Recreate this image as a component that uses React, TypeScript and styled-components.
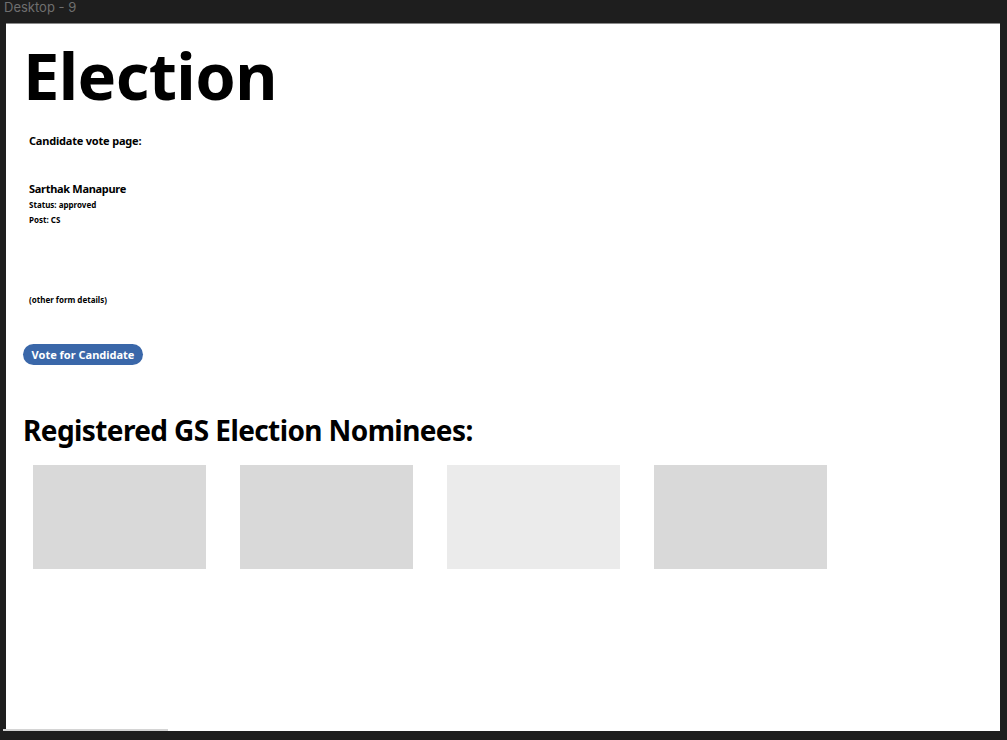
import styled, { createGlobalStyle } from "styled-components";

const Global = createGlobalStyle`
  html, body {
    margin: 0;
    padding: 0;
    background: #1e1e1e;
    height: 100%;
  }
  body {
    font-family: "Noto Sans", "DejaVu Sans", sans-serif;
  }
`;

const nominees = [
  { id: 1, shade: "#d9d9d9" },
  { id: 2, shade: "#d9d9d9" },
  { id: 3, shade: "#ebebeb" },
  { id: 4, shade: "#d9d9d9" },
];

export default function App() {
  return (
    <>
      <Global />
      <Frame>
        <FrameLabel>Desktop - 9</FrameLabel>
        <Canvas>
          <Title>Election</Title>
          <Details>
            <PageLabel>Candidate vote page:</PageLabel>
            <Name>Sarthak Manapure</Name>
            <Meta $gap={7}>Status: approved</Meta>
            <Meta $gap={7}>Post: CS</Meta>
            <Meta $gap={72}>(other form details)</Meta>
          </Details>
          <VoteButton>Vote for Candidate</VoteButton>
          <SectionTitle>Registered GS Election Nominees:</SectionTitle>
          <Cards>
            {nominees.map((n) => (
              <Card key={n.id} $shade={n.shade} />
            ))}
          </Cards>
        </Canvas>
        <ScrollThumb />
      </Frame>
    </>
  );
}

const Frame = styled.div`
  width: 1007px;
  height: 740px;
  box-sizing: border-box;
  padding: 0 7px 9px 6px;
  display: flex;
  flex-direction: column;
  position: relative;
  overflow: hidden;
`;

const FrameLabel = styled.div`
  height: 23px;
  margin-left: -2px;
  font-family: "Inter", "Noto Sans", sans-serif;
  font-size: 13px;
  line-height: 14px;
  color: #6f6f6f;
`;

const Canvas = styled.div`
  flex: 1;
  background: #ffffff;
  border-top: 1px solid #8a8a8a;
  padding: 18px 17px 0;
  display: flex;
  flex-direction: column;
  align-items: flex-start;
`;

const Title = styled.h1`
  margin: 0;
  font-size: 65px;
  line-height: 66px;
  font-weight: 700;
  color: #000;
  letter-spacing: -0.6px;
`;

const Details = styled.div`
  padding-left: 6px;
  margin-top: 27px;
  display: flex;
  flex-direction: column;
`;

const PageLabel = styled.div`
  font-size: 11px;
  line-height: 11px;
  font-weight: 700;
  letter-spacing: -0.2px;
  color: #000;
`;

const Name = styled.div`
  margin-top: 37px;
  font-size: 11px;
  line-height: 11px;
  font-weight: 700;
  letter-spacing: -0.3px;
  color: #000;
`;

const Meta = styled.div<{ $gap?: number }>`
  margin-top: ${(p) => p.$gap ?? 7}px;
  font-size: 8px;
  line-height: 8px;
  font-weight: 700;
  color: #000;
`;

const VoteButton = styled.button`
  margin-top: 40px;
  width: 120px;
  height: 21px;
  border: none;
  border-radius: 11px;
  background: #3a67a9;
  color: #fff;
  font-family: "Noto Sans", "DejaVu Sans", sans-serif;
  font-size: 11px;
  font-weight: 700;
  padding: 0;
  display: flex;
  align-items: center;
  justify-content: center;
`;

const SectionTitle = styled.h2`
  margin: 51px 0 0;
  font-size: 28px;
  line-height: 28px;
  font-weight: 700;
  letter-spacing: -0.6px;
  color: #000;
`;

const Cards = styled.div`
  margin-top: 21px;
  padding-left: 10px;
  display: flex;
  gap: 34px;
`;

const Card = styled.div<{ $shade: string }>`
  width: 173px;
  height: 104px;
  background: ${(p) => p.$shade};
`;

const ScrollThumb = styled.div`
  position: absolute;
  left: 3px;
  bottom: 9px;
  width: 165px;
  height: 2px;
  background: #d4d4d4;
`;
